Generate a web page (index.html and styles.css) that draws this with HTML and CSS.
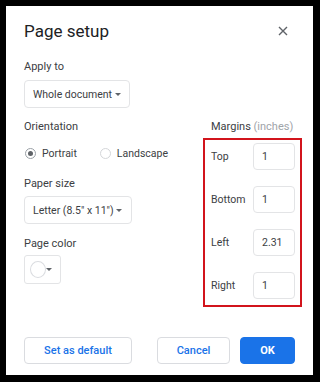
FILE: index.html
```html
<!DOCTYPE html>
<html lang="en">
<head>
  <meta charset="UTF-8" />
  <meta name="viewport" content="width=device-width, initial-scale=1.0" />
  <title>Page setup</title>
  <link rel="stylesheet" href="styles.css">
</head>
<body>
  <div class="dialog">
    <div class="header">
      <h1>Page setup</h1>
      <button class="close" aria-label="Close">
        <svg width="10" height="10" viewBox="0 0 10 10"><path d="M1 1L9 9M9 1L1 9" stroke="#5f6368" stroke-width="1.4" /></svg>
      </button>
    </div>

    <p class="label">Apply to</p>
    <div class="select apply">Whole document <span class="caret"></span></div>

    <div class="columns">
      <div class="left">
        <p class="label">Orientation</p>
        <div class="radios">
          <label class="radio checked"><span class="circle"></span>Portrait</label>
          <label class="radio"><span class="circle"></span>Landscape</label>
        </div>

        <p class="label paper">Paper size</p>
        <div class="select paper-select">Letter (8.5" x 11") <span class="caret"></span></div>

        <p class="label color">Page color</p>
        <div class="swatch"><span class="dot"></span><span class="caret"></span></div>
      </div>

      <div class="right">
        <p class="label margins-label">Margins <span class="unit">(inches)</span></p>
        <div class="margins">
          <div class="row"><span>Top</span><input type="text" value="1" /></div>
          <div class="row"><span>Bottom</span><input type="text" value="1" /></div>
          <div class="row"><span>Left</span><input type="text" value="2.31" /></div>
          <div class="row"><span>Right</span><input type="text" value="1" /></div>
        </div>
      </div>
    </div>

    <div class="footer">
      <button class="btn default">Set as default</button>
      <div class="actions">
        <button class="btn">Cancel</button>
        <button class="btn ok">OK</button>
      </div>
    </div>
  </div>
</body>
</html>
```

FILE: styles.css
```css
body {
  margin: 0;
  background: #000;
  font-family: Roboto, "Liberation Sans", sans-serif;
  color: #3c4043;
}

.dialog {
  margin: 6px 7px 7px 6px;
  height: 369px;
  padding: 13px 18px 11px;
  box-sizing: border-box;
  background: #fff;
  display: flex;
  flex-direction: column;
}

.header {
  display: flex;
  justify-content: space-between;
  align-items: center;
  height: 24px;
}

.header h1 {
  margin: 0;
  font-size: 17px;
  font-weight: 400;
  color: #202124;
}

.close {
  width: 24px;
  height: 24px;
  padding: 0;
  border: none;
  background: none;
  display: flex;
  align-items: center;
  justify-content: center;
}

p {
  margin: 0;
}

.label {
  font-size: 11px;
  line-height: 16px;
  color: #3c4043;
}

.header + .label {
  margin-top: 16px;
}

.select {
  display: inline-flex;
  align-items: center;
  align-self: flex-start;
  height: 28px;
  padding: 0 9px 0 8px;
  box-sizing: border-box;
  border: 1px solid #e3e4e6;
  border-radius: 4px;
  font-size: 10.5px;
  color: #3c4043;
  white-space: pre;
}

.apply {
  margin-top: 5px;
  width: 106px;
}

.caret {
  margin-left: auto;
  width: 0;
  height: 0;
  border-left: 3.5px solid transparent;
  border-right: 3.5px solid transparent;
  border-top: 3.5px solid #5f6368;
}

.columns {
  display: flex;
  justify-content: space-between;
  margin-top: 11px;
}

.left {
  display: flex;
  flex-direction: column;
  align-items: flex-start;
}

.radios {
  display: flex;
  margin-top: 10px;
  height: 16px;
}

.radio {
  display: flex;
  align-items: center;
  font-size: 10.5px;
  margin-left: 1px;
  margin-right: 22px;
}

.circle {
  width: 11px;
  height: 11px;
  box-sizing: border-box;
  border: 1px solid #d4d6d9;
  border-radius: 50%;
  margin-right: 6px;
  display: flex;
  align-items: center;
  justify-content: center;
}

.checked .circle {
  border-color: #9aa0a6;
}

.checked .circle::after {
  content: "";
  width: 5px;
  height: 5px;
  border-radius: 50%;
  background: #5f6368;
}

.paper {
  margin-top: 15px;
}

.paper-select {
  margin-top: 4px;
  width: 108px;
}

.color {
  margin-top: 12px;
}

.swatch {
  display: flex;
  align-items: center;
  margin-top: 3px;
  width: 37px;
  height: 29px;
  padding: 0 8px 0 5px;
  box-sizing: border-box;
  border: 1px solid #e3e4e6;
  border-radius: 3px;
}

.swatch .dot {
  width: 17px;
  height: 17px;
  box-sizing: border-box;
  border: 1px solid #dadce0;
  border-radius: 50%;
}

.right {
  width: 99px;
  margin-right: -7px;
}

.margins-label {
  padding-left: 8px;
  color: #3c4043;
}

.unit {
  color: #a0a4a9;
}

.margins {
  margin-top: 3px;
  border: 2px solid #d2141c;
  padding: 3px 5px 6px 6px;
  display: flex;
  flex-direction: column;
  gap: 16px;
}

.row {
  display: flex;
  justify-content: space-between;
  align-items: center;
  font-size: 10.5px;
}

.row input {
  width: 42px;
  height: 27px;
  box-sizing: border-box;
  border: 1px solid #e3e4e6;
  border-radius: 4px;
  padding: 0 8px;
  font-family: inherit;
  font-size: 10.5px;
  color: #3c4043;
  outline: none;
}

.footer {
  margin-top: auto;
  display: flex;
  justify-content: space-between;
}

.actions {
  display: flex;
  gap: 10px;
}

.btn {
  height: 27px;
  box-sizing: border-box;
  border: 1px solid #dadce0;
  border-radius: 4px;
  background: #fff;
  color: #1a73e8;
  font-family: inherit;
  font-size: 11px;
  font-weight: 500;
  padding: 0;
}

.default {
  width: 108px;
}

.actions .btn {
  width: 73px;
}

.actions .ok {
  width: 55px;
  border-color: #1a73e8;
  background: #1a73e8;
  color: #fff;
  font-weight: 700;
}
```
